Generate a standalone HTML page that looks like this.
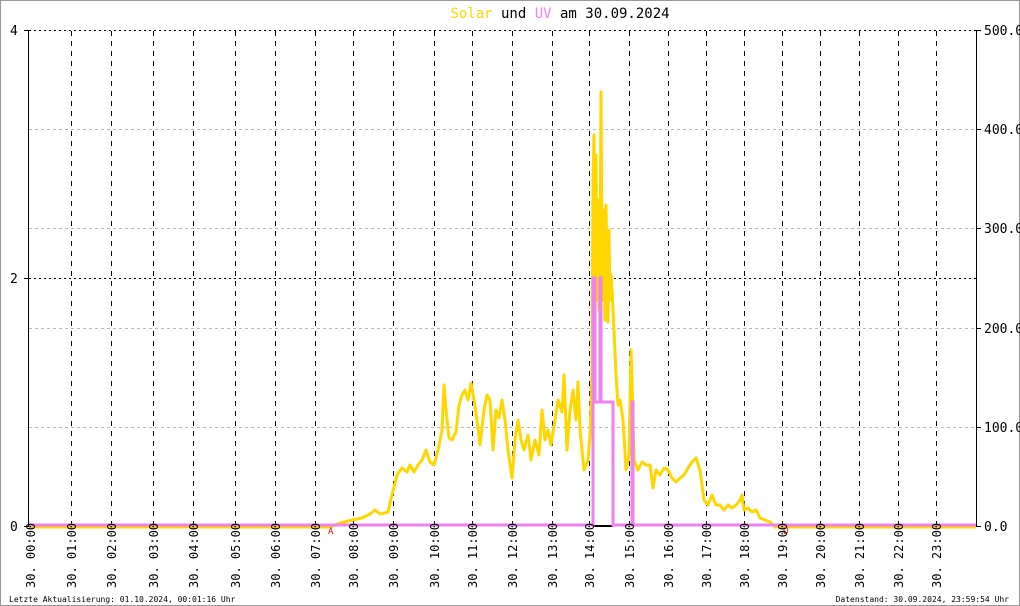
<!DOCTYPE html>
<html><head><meta charset="utf-8"><style>
html,body{margin:0;padding:0;background:#fff}
svg{display:block}
text{font-family:"DejaVu Sans Mono","Liberation Mono",monospace}
</style></head><body>
<svg width="1020" height="606" viewBox="0 0 1020 606" xmlns="http://www.w3.org/2000/svg">
<rect x="0.5" y="0.5" width="1019" height="605" fill="#fff" stroke="#999"/>
<text x="560" y="18" font-size="14" text-anchor="middle"><tspan fill="#ffd700">Solar</tspan><tspan fill="#000"> und </tspan><tspan fill="#ee82ee">UV</tspan><tspan fill="#000"> am 30.09.2024</tspan></text>
<g stroke="#bbb" stroke-dasharray="3,3" stroke-width="1">
<line x1="29" y1="129.5" x2="976" y2="129.5"/>
<line x1="29" y1="228.5" x2="976" y2="228.5"/>
<line x1="29" y1="328.5" x2="976" y2="328.5"/>
<line x1="29" y1="427.5" x2="976" y2="427.5"/>
</g>
<g stroke="#000" stroke-dasharray="2,3" stroke-width="1">
<line x1="29" y1="30.5" x2="976" y2="30.5"/>
<line x1="29" y1="278.5" x2="976" y2="278.5"/>
</g>
<g stroke="#000" stroke-dasharray="5,5" stroke-width="1">
<line x1="71.5" y1="31" x2="71.5" y2="526"/><line x1="111.5" y1="31" x2="111.5" y2="526"/>
<line x1="153.5" y1="31" x2="153.5" y2="526"/><line x1="193.5" y1="31" x2="193.5" y2="526"/>
<line x1="235.5" y1="31" x2="235.5" y2="526"/><line x1="275.5" y1="31" x2="275.5" y2="526"/>
<line x1="315.5" y1="31" x2="315.5" y2="526"/><line x1="353.5" y1="31" x2="353.5" y2="526"/>
<line x1="393.5" y1="31" x2="393.5" y2="526"/><line x1="434.5" y1="31" x2="434.5" y2="526"/>
<line x1="472.5" y1="31" x2="472.5" y2="526"/><line x1="512.5" y1="31" x2="512.5" y2="526"/>
<line x1="552.5" y1="31" x2="552.5" y2="526"/><line x1="589.5" y1="31" x2="589.5" y2="526"/>
<line x1="629.5" y1="31" x2="629.5" y2="526"/><line x1="668.5" y1="31" x2="668.5" y2="526"/>
<line x1="706.5" y1="31" x2="706.5" y2="526"/><line x1="744.5" y1="31" x2="744.5" y2="526"/>
<line x1="782.5" y1="31" x2="782.5" y2="526"/><line x1="820.5" y1="31" x2="820.5" y2="526"/>
<line x1="859.5" y1="31" x2="859.5" y2="526"/><line x1="898.5" y1="31" x2="898.5" y2="526"/>
<line x1="936.5" y1="31" x2="936.5" y2="526"/>
</g>
<g stroke="#000" stroke-width="1">
<line x1="28.5" y1="30" x2="28.5" y2="527"/>
<line x1="976.5" y1="30" x2="976.5" y2="527"/>
<line x1="24" y1="30.5" x2="29" y2="30.5"/><line x1="24" y1="278.5" x2="29" y2="278.5"/><line x1="24" y1="526.5" x2="29" y2="526.5"/>
<line x1="976" y1="30.5" x2="981" y2="30.5"/><line x1="976" y1="129.5" x2="981" y2="129.5"/><line x1="976" y1="228.5" x2="981" y2="228.5"/><line x1="976" y1="328.5" x2="981" y2="328.5"/><line x1="976" y1="427.5" x2="981" y2="427.5"/><line x1="976" y1="526.5" x2="981" y2="526.5"/>
</g>
<g font-size="13" fill="#000">
<text x="10" y="35">4</text><text x="10" y="283">2</text><text x="10" y="531">0</text>
<text x="984" y="35">500.0</text><text x="984" y="134">400.0</text><text x="984" y="233">300.0</text><text x="984" y="333">200.0</text><text x="984" y="432">100.0</text><text x="984" y="531">0.0</text>
</g>
<polyline fill="none" stroke="#ffd700" stroke-width="3" stroke-linejoin="round" points="29,527 330,527 340,523 352,520 362,518 370,514 375,510 380,514 388,512 392,495 397,475 402,468 407,472 410,465 414,472 418,465 422,460 426,450 430,462 434,465 438,450 442,430 444,385 446,410 449,438 452,440 456,432 459,405 462,395 465,390 468,400 471,383 474,400 477,420 480,445 484,410 487,395 490,400 493,450 496,410 499,418 502,400 505,420 508,450 512,478 515,440 518,420 521,440 524,450 528,435 531,460 535,440 539,455 542,410 545,440 548,430 551,445 555,420 558,400 562,412 564,375 567,450 570,410 573,390 576,420 578,382 580,430 584,470 588,460 590,435 592,370 593,180 594,135 595,280 596,155 597,300 598,200 599,310 600,270 601,92 602,250 603,300 604,210 605,320 606,205 607,270 608,322 609,230 610,300 611,275 612,290 614,330 616,375 618,405 620,400 623,420 626,470 629,455 631,350 632,380 634,460 638,470 642,462 646,465 650,465 653,488 656,470 660,475 664,468 668,470 672,478 676,482 680,478 684,475 688,468 692,462 696,458 700,470 704,500 708,505 712,495 716,505 720,505 724,510 728,505 732,508 736,505 740,500 742,495 744,510 748,508 752,512 756,510 760,518 765,520 770,522 775,527 976,527"/>
<line x1="594" y1="526" x2="613" y2="526" stroke="#000" stroke-width="2"/>
<polyline fill="none" stroke="#ee82ee" stroke-width="3" points="29,525 593,525 593,278 595,278 595,402 600,402 600,278 601,278 601,402 613,402 613,525 632,525 632,402 633,402 633,525 976,525"/>
<text x="328" y="534" font-size="9" fill="#e00">A</text>
<text x="783" y="534" font-size="9" fill="#e00">U</text>
<g font-size="12" fill="#000">
<text transform="translate(35,588) rotate(-90)">30. 00:00</text>
<text transform="translate(76,588) rotate(-90)">30. 01:00</text>
<text transform="translate(116,588) rotate(-90)">30. 02:00</text>
<text transform="translate(158,588) rotate(-90)">30. 03:00</text>
<text transform="translate(198,588) rotate(-90)">30. 04:00</text>
<text transform="translate(240,588) rotate(-90)">30. 05:00</text>
<text transform="translate(280,588) rotate(-90)">30. 06:00</text>
<text transform="translate(320,588) rotate(-90)">30. 07:00</text>
<text transform="translate(358,588) rotate(-90)">30. 08:00</text>
<text transform="translate(398,588) rotate(-90)">30. 09:00</text>
<text transform="translate(439,588) rotate(-90)">30. 10:00</text>
<text transform="translate(477,588) rotate(-90)">30. 11:00</text>
<text transform="translate(517,588) rotate(-90)">30. 12:00</text>
<text transform="translate(557,588) rotate(-90)">30. 13:00</text>
<text transform="translate(594,588) rotate(-90)">30. 14:00</text>
<text transform="translate(634,588) rotate(-90)">30. 15:00</text>
<text transform="translate(673,588) rotate(-90)">30. 16:00</text>
<text transform="translate(711,588) rotate(-90)">30. 17:00</text>
<text transform="translate(749,588) rotate(-90)">30. 18:00</text>
<text transform="translate(787,588) rotate(-90)">30. 19:00</text>
<text transform="translate(825,588) rotate(-90)">30. 20:00</text>
<text transform="translate(864,588) rotate(-90)">30. 21:00</text>
<text transform="translate(903,588) rotate(-90)">30. 22:00</text>
<text transform="translate(941,588) rotate(-90)">30. 23:00</text>
</g>
<text x="9" y="602" font-size="8" fill="#000">Letzte Aktualisierung: 01.10.2024, 00:01:16 Uhr</text>
<text x="1009" y="602" font-size="8" fill="#000" text-anchor="end">Datenstand: 30.09.2024, 23:59:54 Uhr</text>
</svg>
</body></html>
